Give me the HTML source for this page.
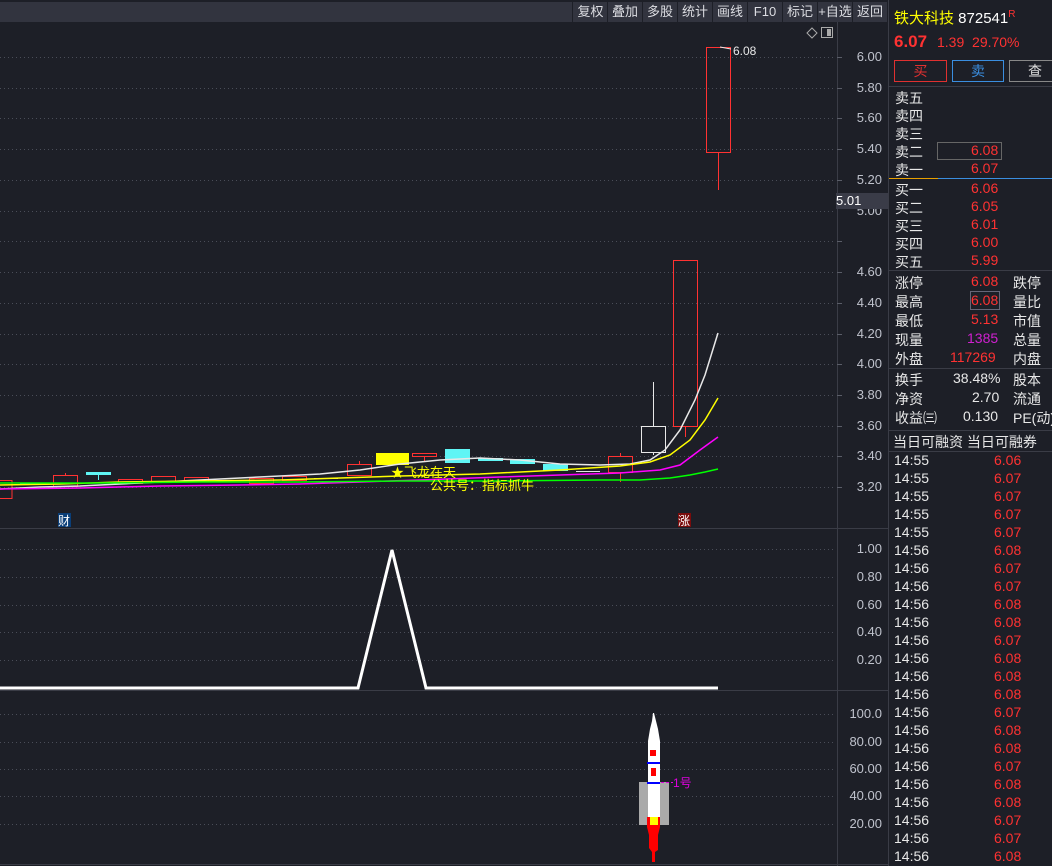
<!DOCTYPE html>
<html><head><meta charset="utf-8"><style>
body{margin:0;width:1052px;height:866px;background:#1d1f27;overflow:hidden;font-family:"Liberation Sans","Noto Sans CJK SC",sans-serif;position:relative}
.tb{position:absolute;top:2px;left:0;width:886px;height:20px;background:#32343f}
.btn{position:absolute;top:2px;height:20px;line-height:20px;font-size:13px;color:#dcdde2;text-align:center;background:#32343f;border-left:1px solid #1d1f27}
.rp{position:absolute;left:888px;top:0;width:164px;height:866px;border-left:1px solid #3a3c46}
.t{position:absolute;font-size:14px;color:#e8e8e8;white-space:nowrap}
.r{color:#ff3232}
.hl{position:absolute;left:0;width:164px;height:1px;background:#3a3c46}
.ax{position:absolute;left:836px;width:46px;text-align:right;font-size:13px;color:#bfc2cc}
</style></head><body>
<div class="tb"></div>
<div class="btn" style="left:572px;width:35px">复权</div>
<div class="btn" style="left:607px;width:34px">叠加</div>
<div class="btn" style="left:642px;width:34px">多股</div>
<div class="btn" style="left:677px;width:34px">统计</div>
<div class="btn" style="left:712px;width:34px">画线</div>
<div class="btn" style="left:747px;width:34px">F10</div>
<div class="btn" style="left:782px;width:34px">标记</div>
<div class="btn" style="left:817px;width:34px">+自选</div>
<div class="btn" style="left:852px;width:34px">返回</div>

<svg width="888" height="866" style="position:absolute;left:0;top:0">
<g stroke="#4a4d58" stroke-width="1" stroke-dasharray="1 3">
<line x1="0" y1="57.5" x2="836" y2="57.5"/><line x1="0" y1="88.5" x2="836" y2="88.5"/><line x1="0" y1="118.5" x2="836" y2="118.5"/><line x1="0" y1="149.5" x2="836" y2="149.5"/><line x1="0" y1="180.5" x2="836" y2="180.5"/><line x1="0" y1="211.5" x2="836" y2="211.5"/><line x1="0" y1="241.5" x2="836" y2="241.5"/><line x1="0" y1="272.5" x2="836" y2="272.5"/><line x1="0" y1="303.5" x2="836" y2="303.5"/><line x1="0" y1="334.5" x2="836" y2="334.5"/><line x1="0" y1="364.5" x2="836" y2="364.5"/><line x1="0" y1="395.5" x2="836" y2="395.5"/><line x1="0" y1="426.5" x2="836" y2="426.5"/><line x1="0" y1="456.5" x2="836" y2="456.5"/><line x1="0" y1="487.5" x2="836" y2="487.5"/>
<line x1="0" y1="549.5" x2="836" y2="549.5"/><line x1="0" y1="577.5" x2="836" y2="577.5"/><line x1="0" y1="605.5" x2="836" y2="605.5"/><line x1="0" y1="632.5" x2="836" y2="632.5"/><line x1="0" y1="660.5" x2="836" y2="660.5"/>
<line x1="0" y1="714.5" x2="836" y2="714.5"/><line x1="0" y1="742.5" x2="836" y2="742.5"/><line x1="0" y1="769.5" x2="836" y2="769.5"/><line x1="0" y1="796.5" x2="836" y2="796.5"/><line x1="0" y1="824.5" x2="836" y2="824.5"/>
</g>
<line x1="0" y1="528.5" x2="888" y2="528.5" stroke="#3a3c46"/>
<line x1="0" y1="690.5" x2="888" y2="690.5" stroke="#3a3c46"/>
<line x1="0" y1="864.5" x2="888" y2="864.5" stroke="#3a3c46"/>
<line x1="837.5" y1="22" x2="837.5" y2="866" stroke="#3a3c46"/>
<!-- candles -->
<g fill="none" stroke="#ff3232" stroke-width="1">
<rect x="-5" y="480.5" width="17" height="18"/>
<rect x="53.5" y="475.5" width="24" height="11"/><line x1="65.5" y1="473" x2="65.5" y2="475"/>
<rect x="118.5" y="479.5" width="24" height="4"/>
<rect x="151.5" y="476.5" width="24" height="5"/>
<rect x="184.5" y="477.5" width="24" height="4"/>
<rect x="249.5" y="478.5" width="24" height="5"/>
<rect x="282.5" y="476.5" width="24" height="4"/>
<rect x="347.5" y="464.5" width="24" height="11"/><line x1="359.5" y1="461" x2="359.5" y2="464"/>
<rect x="412.5" y="453.5" width="24" height="3"/><line x1="424.5" y1="457" x2="424.5" y2="462"/>
<rect x="608.5" y="456.5" width="24" height="16"/><line x1="620.5" y1="453" x2="620.5" y2="456"/><line x1="620.5" y1="473" x2="620.5" y2="482"/>
<rect x="673.5" y="260.5" width="24" height="166"/><line x1="685.5" y1="427" x2="685.5" y2="437"/>
<rect x="706.5" y="47.5" width="24" height="105"/><line x1="718.5" y1="153" x2="718.5" y2="190"/>
</g>
<g fill="#5ff5f5"><rect x="86" y="472" width="25" height="3"/><rect x="98" y="475" width="1" height="5"/>
<rect x="445" y="449" width="25" height="14"/><rect x="478" y="458" width="25" height="3"/><rect x="510" y="459" width="25" height="5"/><rect x="543" y="464" width="25" height="7"/><rect x="20" y="483" width="25" height="2"/></g>
<rect x="376" y="453" width="33" height="12" fill="#ffff00"/>
<g fill="none" stroke="#e8e8e8"><rect x="641.5" y="426.5" width="24" height="26"/><line x1="653.5" y1="382" x2="653.5" y2="426"/><line x1="653.5" y1="453" x2="653.5" y2="455"/>
<line x1="314" y1="478.5" x2="338" y2="478.5"/><line x1="576" y1="471.5" x2="600" y2="471.5"/></g>
<g fill="none" stroke-width="1.5">
<polyline stroke="#e8e8e8" points="0,489 40,487 80,486 120,484 160,482 200,480 240,478 280,476 320,474 360,470 400,464 440,460 480,458 520,460 560,464 600,465 630,464 650,460 665,450 680,430 695,400 705,375 718,333"/>
<polyline stroke="#ffff00" points="0,485 60,484 120,482 200,481 280,480 340,478 400,476 480,474 560,470 620,466 650,462 670,455 690,440 705,420 718,398"/>
<polyline stroke="#ff00ff" points="0,489 80,488 160,486 240,485 300,484 360,482 420,480 500,477 560,475 620,473 660,470 680,465 700,450 718,437"/>
<polyline stroke="#00ff00" points="0,483 100,483 200,482 300,482 400,481 500,481 600,480 640,480 670,478 690,475 705,472 718,469"/>
<polyline stroke="#ffffff" stroke-width="3" points="0,688 358,688 392,550 426,688 718,688"/>
<line x1="720" y1="47" x2="731" y2="49" stroke="#e8e8e8" stroke-width="1"/>
</g>
<text x="733" y="55" fill="#e8e8e8" font-size="12" font-family="Liberation Sans">6.08</text>
<text x="391" y="477" fill="#ffff00" font-size="13" font-family="Liberation Sans,Noto Sans CJK SC">★飞龙在天</text>
<text x="430" y="490" fill="#ffff00" font-size="13" font-family="Liberation Sans,Noto Sans CJK SC">公共号：指标抓牛</text>
<rect x="58" y="513" width="13" height="14" fill="#0a3e78"/><text x="58" y="525" fill="#fff" font-size="12" font-family="Noto Sans CJK SC">财</text>
<rect x="678" y="513" width="13" height="14" fill="#7a0c0c"/><text x="678" y="525" fill="#fff" font-size="12" font-family="Noto Sans CJK SC">涨</text>
<path d="M807,33 l5,-5 l5,5 l-5,5z" fill="none" stroke="#aaa"/>
<rect x="821.5" y="27.5" width="11" height="10" fill="none" stroke="#aaa"/><rect x="827" y="29" width="4" height="7" fill="#aaa"/>
<!-- rocket -->
<rect x="639" y="782" width="30" height="43" fill="#aaa"/>
<path d="M653,713 h1 l2,8 l2,8 l2,12 v84 h-12 v-84 l2,-12 l2,-8z" fill="#fff"/>
<rect x="650" y="750" width="6" height="6" fill="#f00"/><rect x="651" y="768" width="5" height="8" fill="#f00"/>
<rect x="647" y="762" width="13" height="2" fill="#00f"/><rect x="647" y="782" width="13" height="2" fill="#00f"/>
<path d="M647,817 h13 v10 l-2,8 v15 l-3,2 v10 h-3 v-10 l-3,-4 v-13 l-2,-8z" fill="#f00"/>
<rect x="650" y="817" width="8" height="8" fill="#ff0"/>
<line x1="661" y1="782.5" x2="673" y2="782.5" stroke="#e000e0" stroke-dasharray="3 2"/>
<text x="673" y="787" fill="#e000e0" font-size="12" font-family="Liberation Sans,Noto Sans CJK SC">1号</text>
<!-- axis ticks -->
<g stroke="#5a5d68"><line x1="837" y1="57.5" x2="842" y2="57.5"/><line x1="837" y1="88.5" x2="842" y2="88.5"/><line x1="837" y1="118.5" x2="842" y2="118.5"/><line x1="837" y1="149.5" x2="842" y2="149.5"/><line x1="837" y1="180.5" x2="842" y2="180.5"/><line x1="837" y1="241.5" x2="842" y2="241.5"/><line x1="837" y1="272.5" x2="842" y2="272.5"/><line x1="837" y1="303.5" x2="842" y2="303.5"/><line x1="837" y1="334.5" x2="842" y2="334.5"/><line x1="837" y1="364.5" x2="842" y2="364.5"/><line x1="837" y1="395.5" x2="842" y2="395.5"/><line x1="837" y1="426.5" x2="842" y2="426.5"/><line x1="837" y1="456.5" x2="842" y2="456.5"/><line x1="837" y1="487.5" x2="842" y2="487.5"/></g>
</svg>
<div class="ax" style="top:49px">6.00</div><div class="ax" style="top:80px">5.80</div><div class="ax" style="top:110px">5.60</div><div class="ax" style="top:141px">5.40</div><div class="ax" style="top:172px">5.20</div><div class="ax" style="top:203px">5.00</div><div class="ax" style="top:264px">4.60</div><div class="ax" style="top:295px">4.40</div><div class="ax" style="top:326px">4.20</div><div class="ax" style="top:356px">4.00</div><div class="ax" style="top:387px">3.80</div><div class="ax" style="top:418px">3.60</div><div class="ax" style="top:448px">3.40</div><div class="ax" style="top:479px">3.20</div>
<div style="position:absolute;left:836px;top:193px;width:52px;height:16px;background:#3a3c48;color:#fff;font-size:13px;line-height:16px">5.01</div>
<div class="ax" style="top:541px">1.00</div><div class="ax" style="top:569px">0.80</div><div class="ax" style="top:597px">0.60</div><div class="ax" style="top:624px">0.40</div><div class="ax" style="top:652px">0.20</div>
<div class="ax" style="top:706px">100.0</div><div class="ax" style="top:734px">80.00</div><div class="ax" style="top:761px">60.00</div><div class="ax" style="top:788px">40.00</div><div class="ax" style="top:816px">20.00</div>

<div class="rp">
<div class="t" style="left:5px;top:7px;color:#ffff00;font-size:15px">铁大科技 <span style="color:#fff">872541</span><sup style="color:#ff3232;font-size:10px">R</sup></div>
<div class="t r" style="left:5px;top:32px;font-size:17px;font-weight:bold">6.07</div>
<div class="t r" style="left:48px;top:34px">1.39&nbsp;&nbsp;29.70%</div>
<div style="position:absolute;left:5px;top:60px;width:51px;height:20px;border:1px solid #e03030;color:#e03030;text-align:center;font-size:14px;line-height:20px">买</div>
<div style="position:absolute;left:63px;top:60px;width:50px;height:20px;border:1px solid #3a8ee0;color:#3a8ee0;text-align:center;font-size:14px;line-height:20px">卖</div>
<div style="position:absolute;left:120px;top:60px;width:50px;height:20px;border:1px solid #888;color:#ddd;text-align:center;font-size:14px;line-height:20px">查</div>
<div class="hl" style="top:86px"></div>
<div class="t" style="left:6px;top:88px">卖五</div><div class="t" style="left:6px;top:106px">卖四</div><div class="t" style="left:6px;top:124px">卖三</div><div class="t" style="left:6px;top:142px">卖二</div><div class="t" style="left:6px;top:160px">卖一</div>
<div style="position:absolute;left:48px;top:142px;width:63px;height:16px;border:1px solid #666"></div>
<div class="t r" style="left:82px;top:142px">6.08</div><div class="t r" style="left:82px;top:160px">6.07</div>
<div style="position:absolute;left:0;top:178px;width:49px;height:1px;background:#e8a000"></div><div style="position:absolute;left:49px;top:178px;width:115px;height:1px;background:#3a8ee0"></div>
<div class="t" style="left:6px;top:180px">买一</div><div class="t" style="left:6px;top:198px">买二</div><div class="t" style="left:6px;top:216px">买三</div><div class="t" style="left:6px;top:234px">买四</div><div class="t" style="left:6px;top:252px">买五</div>
<div class="t r" style="left:82px;top:180px">6.06</div><div class="t r" style="left:82px;top:198px">6.05</div><div class="t r" style="left:82px;top:216px">6.01</div><div class="t r" style="left:82px;top:234px">6.00</div><div class="t r" style="left:82px;top:252px">5.99</div>
<div class="hl" style="top:270px"></div>
<div class="t" style="left:6px;top:273px">涨停</div><div class="t" style="left:6px;top:292px">最高</div><div class="t" style="left:6px;top:311px">最低</div><div class="t" style="left:6px;top:330px">现量</div><div class="t" style="left:6px;top:349px">外盘</div>
<div class="t r" style="left:82px;top:273px">6.08</div>
<div style="position:absolute;left:81px;top:291px;width:28px;height:17px;border:1px solid #667"></div>
<div class="t r" style="left:82px;top:292px">6.08</div><div class="t r" style="left:82px;top:311px">5.13</div><div class="t" style="left:78px;top:330px;color:#d020d0">1385</div><div class="t r" style="left:61px;top:349px">117269</div>
<div class="t" style="left:124px;top:273px">跌停</div><div class="t" style="left:124px;top:292px">量比</div><div class="t" style="left:124px;top:311px">市值</div><div class="t" style="left:124px;top:330px">总量</div><div class="t" style="left:124px;top:349px">内盘</div>
<div class="hl" style="top:368px"></div>
<div class="t" style="left:6px;top:370px">换手</div><div class="t" style="left:6px;top:389px">净资</div><div class="t" style="left:6px;top:408px">收益㈢</div>
<div class="t" style="left:64px;top:370px">38.48%</div><div class="t" style="left:83px;top:389px">2.70</div><div class="t" style="left:74px;top:408px">0.130</div>
<div class="t" style="left:124px;top:370px">股本</div><div class="t" style="left:124px;top:389px">流通</div><div class="t" style="left:124px;top:408px">PE(动)</div>
<div class="hl" style="top:430px"></div>
<div class="t" style="left:4px;top:432px">当日可融资 当日可融券</div>
<div class="hl" style="top:451px"></div>
<div id="ticks"></div>
</div>
<div style="position:absolute;left:888px;top:452px">
<div class="t" style="left:6px;top:0px">14:55</div><div class="t r" style="left:106px;top:0px">6.06</div>
<div class="t" style="left:6px;top:18px">14:55</div><div class="t r" style="left:106px;top:18px">6.07</div>
<div class="t" style="left:6px;top:36px">14:55</div><div class="t r" style="left:106px;top:36px">6.07</div>
<div class="t" style="left:6px;top:54px">14:55</div><div class="t r" style="left:106px;top:54px">6.07</div>
<div class="t" style="left:6px;top:72px">14:55</div><div class="t r" style="left:106px;top:72px">6.07</div>
<div class="t" style="left:6px;top:90px">14:56</div><div class="t r" style="left:106px;top:90px">6.08</div>
<div class="t" style="left:6px;top:108px">14:56</div><div class="t r" style="left:106px;top:108px">6.07</div>
<div class="t" style="left:6px;top:126px">14:56</div><div class="t r" style="left:106px;top:126px">6.07</div>
<div class="t" style="left:6px;top:144px">14:56</div><div class="t r" style="left:106px;top:144px">6.08</div>
<div class="t" style="left:6px;top:162px">14:56</div><div class="t r" style="left:106px;top:162px">6.08</div>
<div class="t" style="left:6px;top:180px">14:56</div><div class="t r" style="left:106px;top:180px">6.07</div>
<div class="t" style="left:6px;top:198px">14:56</div><div class="t r" style="left:106px;top:198px">6.08</div>
<div class="t" style="left:6px;top:216px">14:56</div><div class="t r" style="left:106px;top:216px">6.08</div>
<div class="t" style="left:6px;top:234px">14:56</div><div class="t r" style="left:106px;top:234px">6.08</div>
<div class="t" style="left:6px;top:252px">14:56</div><div class="t r" style="left:106px;top:252px">6.07</div>
<div class="t" style="left:6px;top:270px">14:56</div><div class="t r" style="left:106px;top:270px">6.08</div>
<div class="t" style="left:6px;top:288px">14:56</div><div class="t r" style="left:106px;top:288px">6.08</div>
<div class="t" style="left:6px;top:306px">14:56</div><div class="t r" style="left:106px;top:306px">6.07</div>
<div class="t" style="left:6px;top:324px">14:56</div><div class="t r" style="left:106px;top:324px">6.08</div>
<div class="t" style="left:6px;top:342px">14:56</div><div class="t r" style="left:106px;top:342px">6.08</div>
<div class="t" style="left:6px;top:360px">14:56</div><div class="t r" style="left:106px;top:360px">6.07</div>
<div class="t" style="left:6px;top:378px">14:56</div><div class="t r" style="left:106px;top:378px">6.07</div>
<div class="t" style="left:6px;top:396px">14:56</div><div class="t r" style="left:106px;top:396px">6.08</div>
</div>
</body></html>
